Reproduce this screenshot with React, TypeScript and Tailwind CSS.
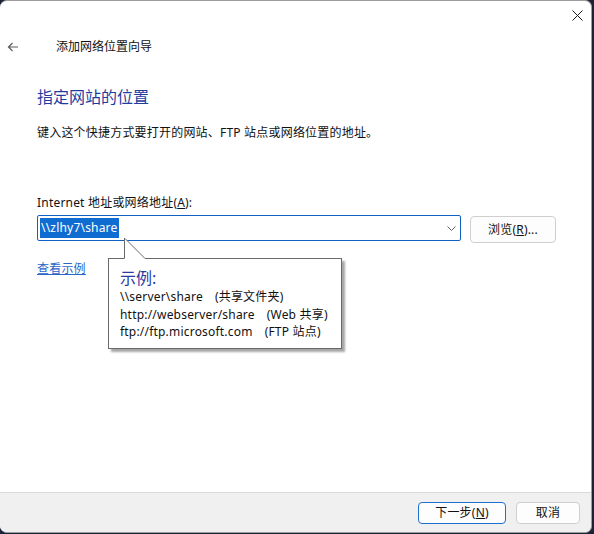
import React from "react";

const FONT = {
  fontFamily: '"Noto Sans", "Noto Sans CJK SC", sans-serif',
};

function BackArrow() {
  return (
    <svg width="12" height="10" viewBox="0 0 12 10" fill="none">
      <path d="M11 5H1.5M5.5 1L1.5 5L5.5 9" stroke="#5c5c5c" strokeWidth="1.2" />
    </svg>
  );
}

function CloseGlyph() {
  return (
    <svg width="11" height="11" viewBox="0 0 11 11" fill="none">
      <path d="M0.5 0.5L10.5 10.5M10.5 0.5L0.5 10.5" stroke="#1b1b1b" strokeWidth="1" />
    </svg>
  );
}

function Chevron() {
  return (
    <svg width="9" height="5" viewBox="0 0 9 5" fill="none">
      <path d="M0.5 0.5L4.5 4.5L8.5 0.5" stroke="#606060" strokeWidth="1" />
    </svg>
  );
}

function ExampleBalloon() {
  return (
    <>
      {/* pointer from the balloon up to the address box */}
      <svg
        className="absolute left-[123px] top-[236px] z-20"
        width="24"
        height="23"
        viewBox="0 0 24 23"
        fill="none"
      >
        <path d="M1.5 1V22H22.5Z" fill="#ffffff" />
        <path d="M1.5 1V21.5M2 1.5L22 21.5" stroke="#6a6a6a" strokeWidth="1" />
      </svg>
      <div className="absolute left-[108px] top-[257px] z-10 h-[91px] w-[234px] border border-[#6a6a6a] bg-white pl-[11px] pt-[8px] shadow-[3px_3px_2px_rgba(0,0,0,0.35)]">
        <div className="text-[16px] leading-[22px] text-[#2b3aa3]">示例:</div>
        <div className="mt-[-1px] text-[12px] leading-[17.5px] tracking-[0.2px] text-[#111]">
          <div>
            \\server\share<span className="ml-[12px]">(共享文件夹)</span>
          </div>
          <div>
            http://webserver/share<span className="ml-[12px]">(Web 共享)</span>
          </div>
          <div>
            ftp://ftp.microsoft.com<span className="ml-[12px]">(FTP 站点)</span>
          </div>
        </div>
      </div>
    </>
  );
}

export default function App() {
  return (
    <div className="h-[534px] w-[594px] overflow-hidden bg-[#1d2236]" style={FONT}>
      <div className="relative flex h-[533px] w-[592px] flex-col overflow-hidden rounded-[7px] border border-l-0 border-[#9d9d9d] bg-white text-[#111]">
        {/* caption bar */}
        <div className="flex h-[29px] items-center justify-end pr-[8px]">
          <CloseGlyph />
        </div>

        {/* wizard title */}
        <div className="flex h-[33px] items-center pt-[1px]">
          <div className="ml-[7px] flex w-[49px]">
            <BackArrow />
          </div>
          <span className="text-[12px] leading-[16px]">添加网络位置向导</span>
        </div>

        <div className="flex flex-col pl-[37px] tracking-[0.2px]">
          <h1 className="mt-[23px] text-[16px] leading-[22px] tracking-normal text-[#1f3d9e]">指定网站的位置</h1>
          <p className="mt-[17px] text-[12px] leading-[16px]">
            键入这个快捷方式要打开的网站、FTP 站点或网络位置的地址。
          </p>

          <label className="mt-[54px] text-[12px] leading-[16px]">
            Internet 地址或网络地址(<span className="underline">A</span>):
          </label>

          <div className="mt-[4px] flex items-start gap-[9px]">
            <div className="flex h-[26px] w-[424px] items-center justify-between rounded-[2px] border border-[#0f62c4] pl-[2px] pr-[4px]">
              <span className="flex h-[20px] items-center bg-[#0f6cd1] px-[1px] text-[12px] leading-[16px] text-white">
                \\zlhy7\share
              </span>
              <Chevron />
            </div>
            <button className="mt-[1px] flex h-[27px] w-[86px] items-center justify-center rounded-[4px] border border-[#cfcfcf] bg-[#fdfdfd] text-[12px] leading-[16px]">
              浏览(<span className="underline">R</span>)...
            </button>
          </div>

          <a className="mt-[18px] w-fit text-[12px] leading-[16px] text-[#2a66c8] underline">查看示例</a>
        </div>

        <ExampleBalloon />

        {/* command area */}
        <div className="mt-auto flex h-[40px] items-center justify-end gap-[10px] border-t border-[#dadada] bg-[#f0f0f0] pr-[11px] tracking-[0.2px]">
          <button className="flex h-[22px] w-[88px] items-center justify-center rounded-[4px] border border-[#1d6fd0] bg-[#fdfdfd] text-[12px] leading-[16px]">
            下一步(<span className="underline">N</span>)
          </button>
          <button className="flex h-[22px] w-[64px] items-center justify-center rounded-[4px] border border-[#cfcfcf] bg-[#fdfdfd] text-[12px] leading-[16px]">
            取消
          </button>
        </div>
      </div>
    </div>
  );
}
